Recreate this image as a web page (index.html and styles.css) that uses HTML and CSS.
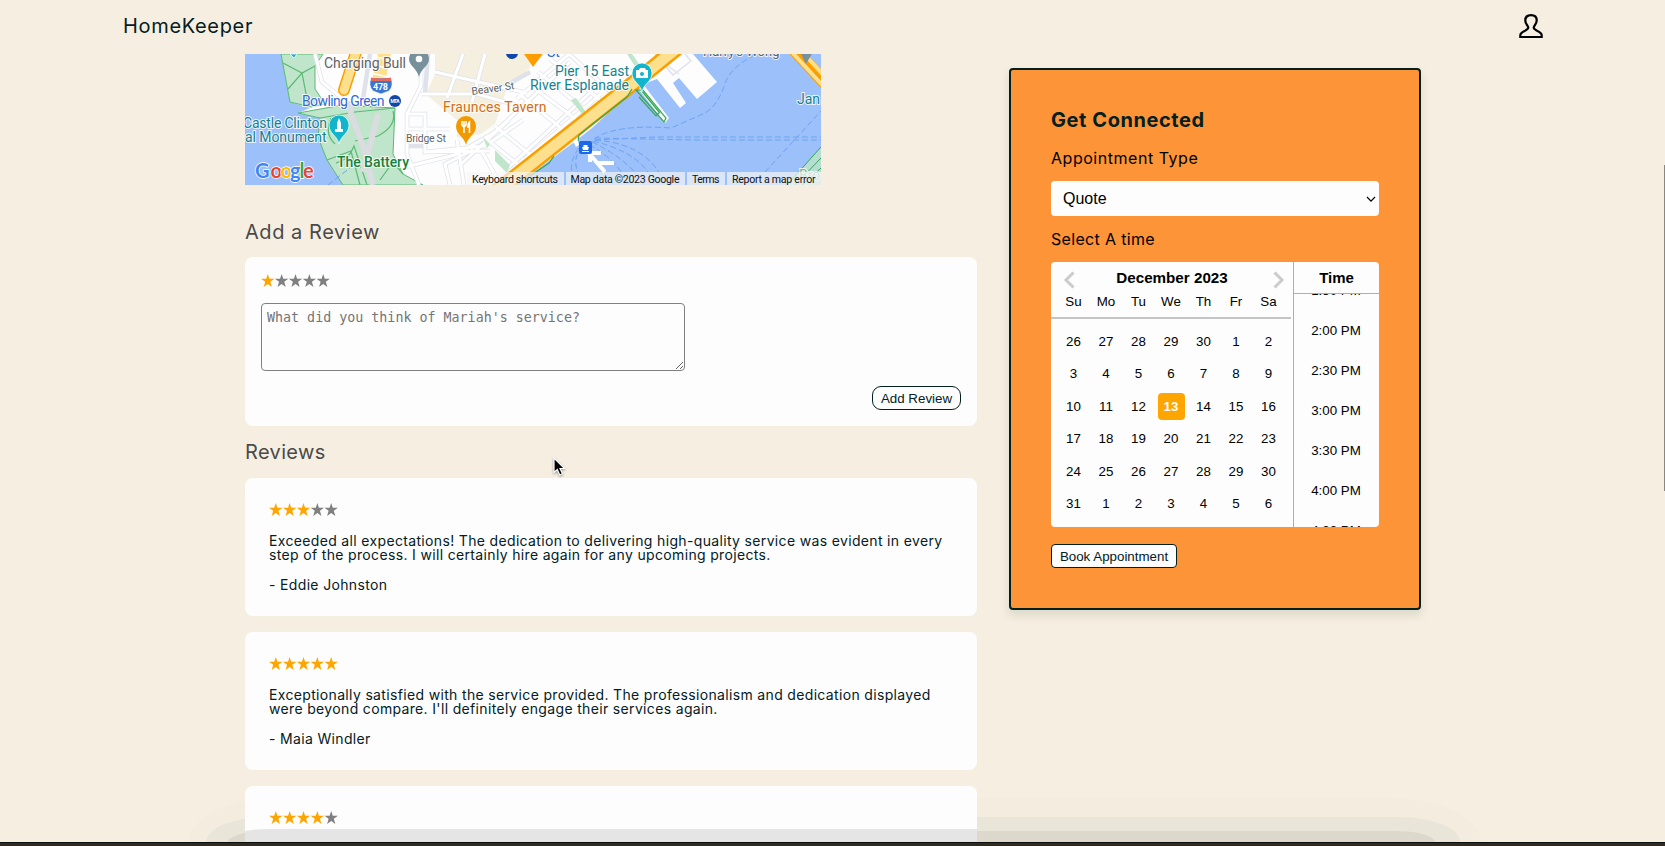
FILE: index.html
```html
<!DOCTYPE html>
<html lang="en">
<head>
<meta charset="utf-8">
<title>HomeKeeper</title>
<link rel="stylesheet" href="styles.css">
</head>
<body>
<svg class="defs" width="0" height="0"><defs>
<path id="star" d="M6.8 0 8.4 4.7H13.5L9.4 7.8 10.9 13 6.8 9.9 2.7 13 4.2 7.8.1 4.7H5.2Z"/>
<g id="gold" fill="#ffa500"><use href="#star"/></g><g id="grey" fill="#808080"><use href="#star"/></g>
</defs></svg>
<div class="page">
<header class="nav"><a class="brand">HomeKeeper</a>
<svg class="user" width="24" height="25" viewBox="0 0 24 25" fill="none" stroke="#000" stroke-width="2.2"><path d="M1.3 23V21.2C1.3 17 9.3 17 9.3 13.6C9.3 11.5 6.3 10.5 6.3 6.5C6.3 3.2 8.6 1.2 12 1.2S17.700 3.2 17.700 6.5C17.700 10.5 14.700 11.5 14.700 13.6C14.700 17 22.700 17 22.700 21.200V23Z"/></svg>
</header>
<main class="content">
<div class="left">
<svg class="map" width="576" height="131" viewBox="0 0 576 131">
<rect width="576" height="131" fill="#9cc0f9"/>
<path fill="#fdfdfd" d="M36 0 45 48 65 54 53 59 75 64 73 83 82 106 98 131H264L285 121 305 106 328 89 347 74 385 39 392 33 420 69 424 64 398 30 412 25 435 54 441 49 428 29 434 24 452 45 472 28 448 0Z"/>
<path fill="#f5efe0" d="M190 0H285V14L262 34 250 70 236 80 212 84V66L190 48 181 40 190 20Z"/>
<path fill="#bfe5cb" stroke="#5bb974" d="M36 0 45 48 66 53 80 50 70 35 70 12 78 0ZM53 59 98 51 150 54 148 100 158 120 178 131H98L82 106 73 83 75 64Z"/>
<path fill="none" stroke="#5bb974" stroke-width="1.2" d="M38 9 57 19 70 12M43 35 57 19 63 50M75 64 110 58 150 54M110 87 133 82Q152 72 148 57M91 109Q104 106 109 92L122 131M82 106 106 97 115 131M135 126 148 108 158 120M86 64Q79 80 90 90"/>
<g fill="none" stroke="#dfe2ea" stroke-width="4.500"><path d="M70 0 77 28 100 47M125 0 118 45M176 0V32L162 60V100L174 131M176 40H232L278 53M162 60H180V98L240 92 278 66M162 75H205M164 92H180M202 44 218 0M183 0 180 40M240 0 227 48M190 18 282 39M212 86 219 131M180 98 245 97M160 113 210 101 250 78 325 8M205 131 200 110 228 96M236 96 254 128M214 112 264 66M274 40 316 74M285 31 332 66M293 18 345 60M305 5 360 50M324 0 368 40M240 84 275 112M250 72 288 103M262 115 348 36M280 105 356 40M272 45 324 0M255 35 285 18"/></g>
<g fill="none" stroke="#fff" stroke-width="3"><path d="M70 0 77 28 100 47M176 0V32L162 60V100L174 131M176 40H232L278 53M162 60H180V98L240 92 278 66M162 75H205M202 44 218 0M240 0 227 48M190 18 282 39M212 86 219 131M180 98 245 97M160 113 210 101 250 78 325 8M205 131 200 110 228 96M236 96 254 128M214 112 264 66M274 40 316 74M285 31 332 66M293 18 345 60M305 5 360 50M324 0 368 40M240 84 275 112M250 72 288 103M262 115 348 36M280 105 356 40M272 45 324 0"/></g>
<path fill="none" stroke="#dfe2ea" stroke-width="1.5" d="M410 0 428 21 446 7 440 0M423 12 434 20"/>
<path fill="#bfe5cb" d="M250 96 265 111 262 119 250 107ZM238 83 245 90 242 94ZM326 46 331 44 341 58 337 60ZM382 0H387L397 14 393 17Z"/>
<path fill="none" stroke="#dadce0" stroke-width="6" d="M104 47 106 60 118 92 128 131M133 60 118 118"/>
<g fill="none" stroke="#fb9f00"><path stroke-width="12" stroke-linecap="round" d="M113-8 99 36"/><path stroke-width="16" d="M252 137 285 111 395 24 432-6"/><path stroke-width="13" d="M545-9 582 31"/></g>
<g fill="none" stroke="#fde08d"><path stroke-width="9" stroke-linecap="round" d="M113-8 99 36"/><path stroke-width="13" stroke-dasharray="7 1.500" d="M140-3 134 25"/><path stroke-width="11" d="M252 137 285 111 395 24 432-6"/><path stroke-width="4" d="M543-6 580 34M548-12 586 29"/></g>
<path fill="none" stroke="#34a853" stroke-width="1.2" d="M285 122 304 109 309 102M333 87 334 81 345 72 382 43 387 35M391 36 419 68 421 64 398 36ZM396 36 414 58M394 43 411 62 415 58"/>
<path fill="#bfe5cb" d="M542 131 576 93V131Z" opacity=".8"/>
<path fill="none" stroke="#34a853" d="M542 131 576 93M550 131 576 104M557 131 576 114"/>
<g fill="none" stroke="#6ea2f4" stroke-dasharray="6 3"><path d="M349 85Q370 70 426 74L460 59Q473 51 480 30 485 13 512 0M350 86 410 83H576M350 84 450 86H576M520 118 576 57"/><path d="M350 86Q405 90 420 131M348 87Q400 100 409 131M347 88Q383 105 400 131M344 91Q368 102 385 131M338 93Q323 106 339 130M334 94Q320 113 332 131M83 131 110 110"/></g>
<path fill="none" stroke="#fff" stroke-width="4" d="M342 97 360 118M345 99H356M345 100V108M351 109H369"/>
<path fill="#fff" d="M328 87 332 84 334 91 331 93Z"/>
<rect x="334" y="87" width="13" height="13" rx="2" fill="#1a67e8"/><path fill="#fff" d="M337 93H344L343 96H338ZM338.5 91H342.5V93H338.5ZM337 97H344V98H337Z"/>
<g class="pins">
<path fill="#78909c" d="M164 5a10 10 0 1 1 20 0C184 12 176 14 174 23 172 14 164 12 164 5ZM555-2H568L561 10Z"/><circle cx="174" cy="5" r="3.3" fill="#fff"/>
<path fill="#12b5cb" stroke="#fff" stroke-width=".7" d="M84 71a10 10 0 1 1 20 0C104 80 96 81 94 90 92 81 84 80 84 71ZM387 19a10 10 0 1 1 20 0C407 28 399 29 397 38 395 29 387 28 387 19ZM45 0H52L49 4Z"/>
<path fill="#fff" d="M94 64 96 69V75H98V78H90V75H92V69ZM391 16H394L395 14H400L401 16H403V24H391Z"/><circle cx="397" cy="20" r="2" fill="#12b5cb"/>
<path fill="#f29900" d="M211 72a10 10 0 1 1 20 0C231 81 223 82 221 91 219 82 211 81 211 72Z"/><path d="M217 67V71Q219 74 221 71V67M219 67V79M224.5 79V68Q222.500 70 223 74" fill="none" stroke="#fff" stroke-width="1.5"/>
<path fill="#ff9d00" d="M277-3H300L288 13Z"/>
<circle cx="150" cy="47" r="6" fill="#1246a8"/><circle cx="267" cy="-1" r="6" fill="#1246a8"/>
</g>
<text x="145.500" y="49" class="mta" textLength="9">MTA</text>
<path fill="#3976d2" stroke="#fff" stroke-width=".6" d="M126 24H146Q149 32 144 37L136 40 128 37Q123 32 126 24Z"/><path fill="#e66b5b" d="M126 23.500 129 24 136 24.500 143 24 146 23.500V27H126Z"/><text x="128" y="35.500" class="shield" textLength="15">478</text>
<g class="labels" font-size="14">
<text x="79" y="13.700" textLength="82" fill="#5f6368">Charging Bull</text>
<text x="57" y="51.500" textLength="82.500" fill="#3268d6">Bowling Green</text>
<text x="-2" y="73.800" textLength="84" fill="#16828f">Castle Clinton</text>
<text x="0" y="87.800" textLength="81.500" fill="#16828f">al Monument</text>
<text x="92" y="112.800" textLength="72" fill="#188038" font-weight="500">The Battery</text>
<text x="198" y="57.700" textLength="103.500" fill="#d56e0c">Fraunces Tavern</text>
<text x="310" y="21.700" textLength="74" fill="#16828f">Pier 15 East</text>
<text x="285" y="35.700" textLength="99" fill="#16828f">River Esplanade</text>
<text x="552" y="50" fill="#16828f">Jan</text>
<text x="302" y="3" fill="#3268d6">St</text>
<text x="458" y="2" fill="#5f6368" font-size="13">Harry's Wong</text>
<text x="554" y="126" fill="#7eb596">Bro</text>
<text x="161" y="87.500" textLength="40" font-size="10.500" fill="#5f6368">Bridge St</text>
<text x="227" y="41" textLength="43" font-size="10.500" fill="#5f6368" transform="rotate(-8 227 41)">Beaver St</text>
</g>
<g class="google"><text y="124"><tspan x="10" fill="#4285f4">G</tspan><tspan x="25.500" fill="#ea4335">o</tspan><tspan x="35.500" fill="#fbbc04">o</tspan><tspan x="45" fill="#4285f4">g</tspan><tspan x="54.500" fill="#34a853">l</tspan><tspan x="58" fill="#ea4335">e</tspan></text></g>
<path fill="#f5f5f5" opacity=".7" d="M222 118H319V131H222ZM321 118H440V131H321ZM442 118H480V131H442ZM482 118H576V131H482Z"/>
<g class="legal"><text x="227" y="128.500" textLength="86">Keyboard shortcuts</text><text x="325.500" y="128.500" textLength="109">Map data ©2023 Google</text><text x="447" y="128.500" textLength="27.500">Terms</text><text x="487" y="128.500" textLength="83.500">Report a map error</text></g>
</svg>
<h2 class="title t-add">Add a Review</h2>
<section class="card compose">
<svg class="stars" width="70" height="13"><use href="#gold"/><use href="#grey" x="13.850"/><use href="#grey" x="27.700"/><use href="#grey" x="41.550"/><use href="#grey" x="55.400"/></svg>
<textarea class="comment" placeholder="What did you think of Mariah's service?"></textarea>
<button class="btn add">Add Review</button>
</section>
<h2 class="title t-rev">Reviews</h2>
<div class="list">
<article class="card review">
<svg class="stars" width="70" height="13"><use href="#gold"/><use href="#gold" x="13.850"/><use href="#gold" x="27.700"/><use href="#grey" x="41.550"/><use href="#grey" x="55.400"/></svg>
<p class="text">Exceeded all expectations! The dedication to delivering high-quality service was evident in every<br>step of the process. I will certainly hire again for any upcoming projects.</p>
<p class="author">- Eddie Johnston</p>
</article>
<article class="card review">
<svg class="stars" width="70" height="13"><use href="#gold"/><use href="#gold" x="13.850"/><use href="#gold" x="27.700"/><use href="#gold" x="41.550"/><use href="#gold" x="55.400"/></svg>
<p class="text">Exceptionally satisfied with the service provided. The professionalism and dedication displayed<br>were beyond compare. I'll definitely engage their services again.</p>
<p class="author">- Maia Windler</p>
</article>
<article class="card review">
<svg class="stars" width="70" height="13"><use href="#gold"/><use href="#gold" x="13.850"/><use href="#gold" x="27.700"/><use href="#gold" x="41.550"/><use href="#grey" x="55.400"/></svg>
</article>
</div>
</div>
<aside class="connect">
<h3 class="heading">Get Connected</h3>
<label class="label type">Appointment Type</label>
<div class="field"><select class="select"><option>Quote</option></select><svg class="chevron" width="10" height="7" fill="none" stroke="#000" stroke-width="1.2"><path d="M1 1 5 5.200 9 1"/></svg></div>
<label class="label when">Select A time</label>
<div class="picker">
<div class="calendar">
<div class="cal-head">
<div class="month"><svg width="12" height="18" fill="none" stroke="#ccc" stroke-width="3"><path d="M10.500 1.500 3 9 10.500 16.500"/></svg><b>December 2023</b><svg width="12" height="18" fill="none" stroke="#ccc" stroke-width="3"><path d="M1.500 1.500 9 9 1.500 16.500"/></svg></div>
<div class="week names"><span>Su</span><span>Mo</span><span>Tu</span><span>We</span><span>Th</span><span>Fr</span><span>Sa</span></div>
</div>
<div class="week days"><span>26</span><span>27</span><span>28</span><span>29</span><span>30</span><span>1</span><span>2</span><span>3</span><span>4</span><span>5</span><span>6</span><span>7</span><span>8</span><span>9</span><span>10</span><span>11</span><span>12</span><span class="today">13</span><span>14</span><span>15</span><span>16</span><span>17</span><span>18</span><span>19</span><span>20</span><span>21</span><span>22</span><span>23</span><span>24</span><span>25</span><span>26</span><span>27</span><span>28</span><span>29</span><span>30</span><span>31</span><span>1</span><span>2</span><span>3</span><span>4</span><span>5</span><span>6</span></div>
</div>
<div class="times"><b class="time-head">Time</b>
<div class="slots"><span>1:30 PM</span><span>2:00 PM</span><span>2:30 PM</span><span>3:00 PM</span><span>3:30 PM</span><span>4:00 PM</span><span>4:30 PM</span></div></div>
</div>
<button class="btn book">Book Appointment</button>
</aside>
</main>
<div class="shade outer"></div><div class="shade mid"></div><div class="shade inner"></div><div class="veil"></div>
<div class="desktop"></div><div class="scroll"></div>
<svg class="cursor" width="14" height="20" viewBox="0 0 14 20"><path d="M1 1V15.500L4.300 12.500 6.700 18 9.500 16.800 7 11.500H11.500Z" fill="#000" stroke="#fff" stroke-width="1.200"/></svg>
</div>
</body>
</html>
```
FILE: styles.css
```css
* { box-sizing: border-box; }
body { margin: 0; background: #f6efe1; font-family: Inter, sans-serif; color: #03201f; overflow: hidden; }
h2, h3, p { margin: 0; }
.defs { position: absolute; }
.page { position: relative; height: 846px; overflow: hidden; isolation: isolate; }
.nav { height: 54px; padding: 14px 122px 0 123px; display: flex; justify-content: space-between; align-items: flex-start; }
.brand { font-size: 20px; line-height: 24px; letter-spacing: .67px; }
.content { display: flex; padding-left: 245px; gap: 32px; align-items: flex-start; }
.left { width: 732px; }
.map { display: block; overflow: hidden; font-family: Roboto, sans-serif; }
.labels text { paint-order: stroke; stroke: #fff; stroke-opacity: .8; stroke-width: 2px; }
.shield { font-size: 9px; font-weight: 700; fill: #fff; }
.mta { font-size: 5px; font-weight: 700; fill: #fff; }
.google { font-family: Lato, sans-serif; font-size: 20px; font-weight: 700; }
.google text { paint-order: stroke; stroke: #fff; stroke-width: 1.5px; }
.legal { font-size: 10.6px; fill: #111; }
.title { font-size: 20px; line-height: 24px; font-weight: 400; color: #4a4a4a; white-space: nowrap; }
.t-add { margin: 35px 0 13px; letter-spacing: .55px; }
.t-rev { margin: 14px 0 14px; letter-spacing: .35px; }
.card { background: #fdfdfd; border-radius: 8px; }
.stars { display: block; }
.compose { height: 169px; padding: 17px 16px 16px; display: flex; flex-direction: column; align-items: flex-start; }
.comment { margin-top: 16px; width: 423.5px; height: 68px; padding: 6px 5px 5px; border: 1px solid #808080; border-radius: 4px; background: transparent; font: 13.33px "DejaVu Sans Mono", monospace; }
.comment::placeholder { color: #757575; }
.btn { background: #fdfdfd; color: #03201f; border: 1px solid #03201f; font: 13.33px "Liberation Sans", sans-serif; padding: 0; height: 24px; }
.add { align-self: flex-end; width: 89px; margin-top: 15px; border-radius: 9px; }
.list { display: flex; flex-direction: column; gap: 16px; }
.review { height: 138px; padding: 25px 24px; }
.text, .author { font-size: 14px; line-height: 14.2px; white-space: nowrap; letter-spacing: .34px; }
.text { margin-top: 17.5px; }
.author { margin-top: 16px; }
.connect { width: 412px; height: 542px; margin-top: 14px; padding: 37.5px 40px 0; border: 2px solid #03201f; border-radius: 4px; background: #fd9438; box-shadow: 0 5px 8px 1px rgba(0, 50, 30, .1); display: flex; flex-direction: column; align-items: flex-start; }
.heading { font-size: 20px; line-height: 24px; font-weight: 700; letter-spacing: .57px; }
.label { font-size: 16px; line-height: 20px; color: #000; }
.type { margin: 16px 0 13.5px; letter-spacing: .53px; }
.when { margin: 12.5px 0 13.5px; letter-spacing: .33px; }
.field { position: relative; height: 35px; }
.select { display: block; appearance: none; width: 328px; height: 35px; padding: 0 12px; border: 0; border-radius: 4px; background: #fdfdfd; color: #000; font: 16px "Liberation Sans", sans-serif; }
.chevron { position: absolute; right: 3px; top: 15px; }
.picker { display: flex; width: 328px; height: 265px; border-radius: 4px; overflow: hidden; background: #fdfdfd; color: #000; font: 13.33px "Liberation Sans", sans-serif; }
.calendar { width: 242px; }
.cal-head { width: 240px; height: 57px; border-bottom: 2px solid #c4c4c4; }
.month { display: flex; justify-content: space-between; height: 29px; padding: 9px 6px 0 12px; font-size: 15.2px; line-height: 15px; }
.month b { margin: -1px 4px 0 0; }
.week { display: grid; grid-template-columns: repeat(7, 32.5px); padding-left: 6.25px; text-align: center; }
.names { line-height: 22px; }
.days { grid-auto-rows: 32.5px; padding-top: 6.5px; line-height: 32.5px; }
.today { width: 27px; height: 27px; margin: 2.5px auto; border-radius: 4px; background: #ffa500; color: #fff; font-weight: 700; line-height: 27px; }
.times { width: 86px; border-left: 1px solid #aeaeae; padding-right: 1px; text-align: center; }
.time-head { display: block; height: 32px; margin-right: -1px; border-bottom: 1px solid #aeaeae; font-size: 15px; line-height: 31px; }
.slots { height: 233px; overflow: hidden; }
.slots span { display: block; height: 40px; line-height: 40px; }
.slots span:first-child { margin-top: -23px; }
.book { width: 126px; margin-top: 17px; border-radius: 4px; }
.shade { position: absolute; z-index: -1; bottom: 4px; }
.outer { left: 188px; right: 184px; top: 798px; border-radius: 90px 90px 0 0 / 44px 44px 0 0; background: #f5ece0; }
.mid { left: 206px; right: 205px; top: 817px; border-radius: 60px 60px 0 0 / 25px 25px 0 0; background: #e9e6d9; }
.inner { left: 228px; right: 230px; top: 831px; border-radius: 40px 40px 0 0 / 11px 11px 0 0; background: #dcd8cb; }
.veil { position: absolute; left: 245px; width: 732px; top: 829px; height: 13px; background: #e5e5e5; border-top-left-radius: 25px 3px; }
.desktop { position: absolute; left: 0; right: 0; top: 842px; height: 4px; background: #302b22; border-top: 1px solid #0c100c; }
.scroll { position: absolute; right: 0; top: 165px; width: 1px; height: 326px; background: #8a8780; }
.cursor { position: absolute; left: 553px; top: 457px; filter: drop-shadow(0 1px 1px rgba(0, 0, 0, .4)); }
```
